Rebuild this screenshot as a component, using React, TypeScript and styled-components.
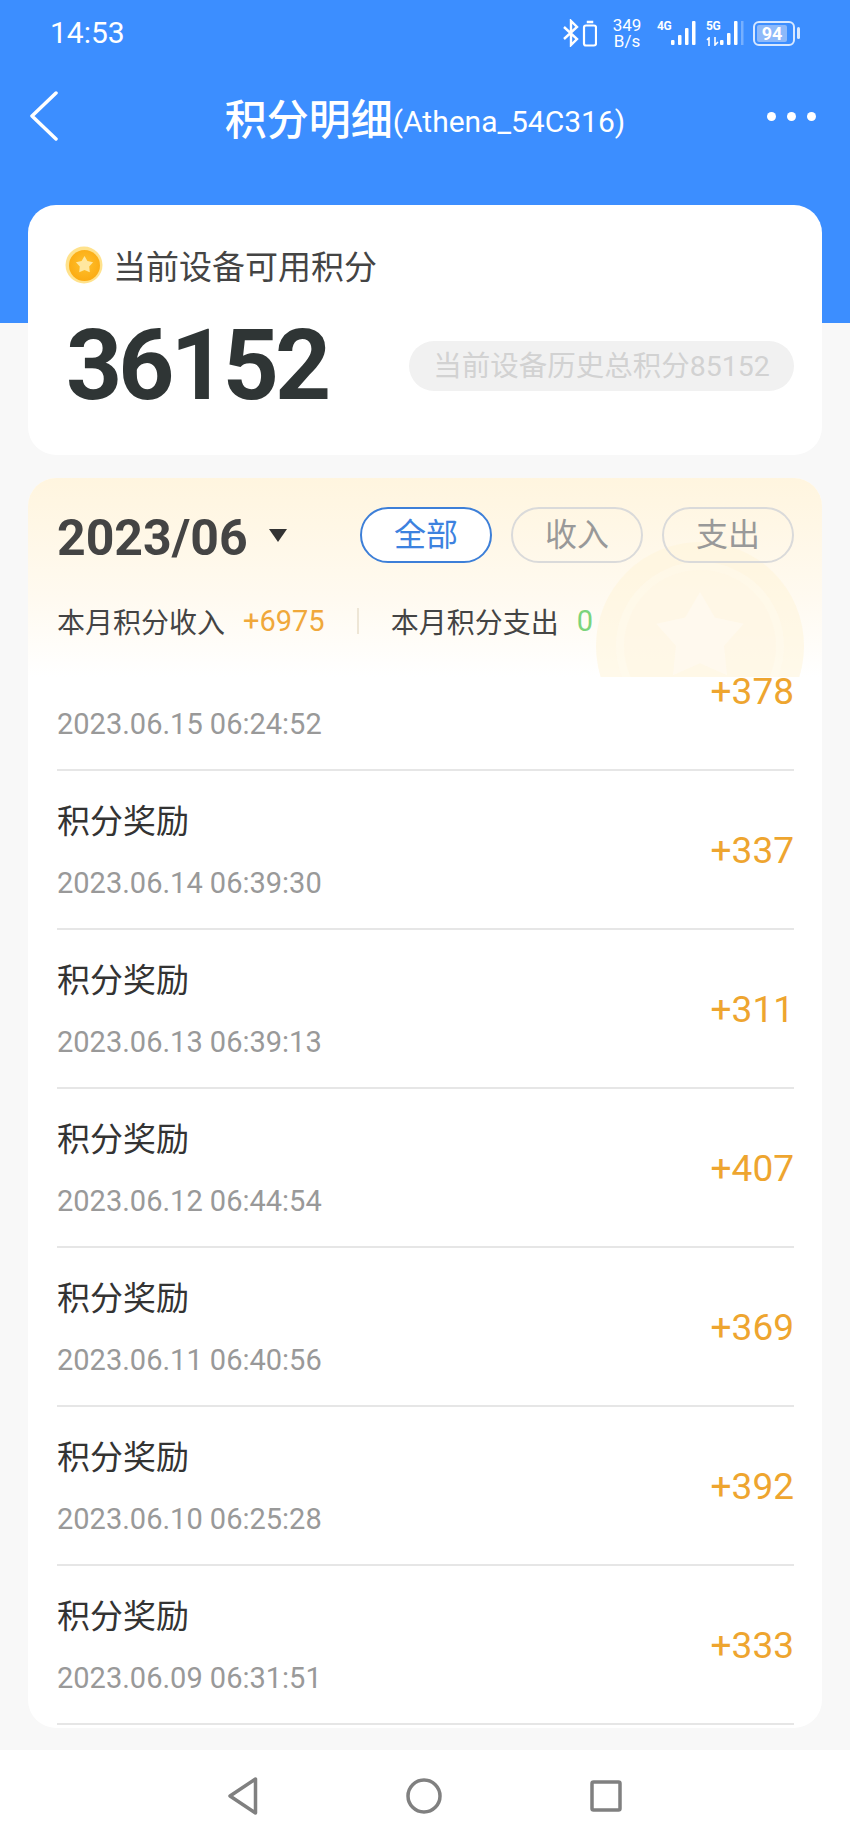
import styled, { createGlobalStyle } from 'styled-components'

const GlobalStyle = createGlobalStyle`
  html, body {
    margin: 0;
    padding: 0;
    background: #f8f8f8;
  }
  * {
    box-sizing: border-box;
  }
`
const Page = styled.div`
  width: 850px;
  height: 1842px;
  display: flex;
  flex-direction: column;
  overflow: hidden;
  font-family: Roboto, "Noto Sans CJK SC", sans-serif;
  background: linear-gradient(#3c8eff 323px, #f8f8f8 323px);
`
const StatusBar = styled.div`
  height: 66px;
  padding: 0 50px;
  display: flex;
  align-items: center;
  justify-content: space-between;
  color: #fff;
`
const Clock = styled.span`
  font-size: 30px;
  line-height: 66px;
`
const StatusIcons = styled.div`
  display: flex;
  align-items: center;
  height: 32px;
`
const Speed = styled.div`
  width: 30px;
  margin: 0 15px;
  font-size: 17px;
  line-height: 16px;
  text-align: center;
`
const Signal = styled.div<{ $right: number }>`
  display: flex;
  height: 26px;
  margin-right: ${p => p.$right}px;
`
const NetStack = styled.div`
  width: 14px;
  display: flex;
  flex-direction: column;
  justify-content: space-between;
`
const NetLabel = styled.span`
  font-size: 12px;
  font-weight: 700;
  line-height: 12px;
  letter-spacing: -0.5px;
`
const Battery = styled.div`
  width: 42px;
  height: 25px;
  padding: 2px;
  border: 2px solid #d8e8ff;
  border-radius: 6px;
  display: flex;
`
const BatteryFill = styled.div`
  width: 30px;
  border-radius: 2px;
  background: #8db9fa;
  color: #fff;
  font-size: 18px;
  font-weight: 700;
  line-height: 17px;
  text-align: center;
`
const BatteryCap = styled.div`
  width: 3px;
  height: 12px;
  margin-left: 2px;
  border-radius: 2px;
  background: #d8e8ff;
`
const NavBar = styled.div`
  height: 100px;
  padding: 0 34px 0 30px;
  display: flex;
  align-items: center;
  justify-content: space-between;
`
const Title = styled.div`
  color: #fff;
  font-size: 42px;
  font-weight: 500;
  display: flex;
  align-items: center;
  margin-left: 25px;
`
const SubTitle = styled.span`
  margin-top: 10px;
  font-size: 30px;
  font-weight: 400;
`
const Dots = styled.div`
  display: flex;
  gap: 11px;
`
const Dot = styled.i`
  width: 9px;
  height: 9px;
  border-radius: 50%;
  background: #fff;
`
const Card = styled.section`
  margin: 39px 28px 0 28px;
  height: 250px;
  padding: 40px 28px 0 37px;
  border-radius: 28px;
  background: #fff;
`
const CardLabel = styled.div`
  display: flex;
  align-items: center;
  gap: 10px;
  height: 40px;
  color: #444;
  font-size: 33px;
`
const PointsRow = styled.div`
  margin-top: 31px;
  height: 100px;
  display: flex;
  align-items: center;
  justify-content: space-between;
`
const Points = styled.div`
  color: #2f3535;
  font-size: 98px;
  font-weight: 700;
  letter-spacing: -4px;
  line-height: 100px;
  margin-left: 1px;
`
const TotalPill = styled.div`
  width: 385px;
  height: 50px;
  border-radius: 25px;
  background: #f1f1f1;
  color: #d2d2d2;
  font-size: 28.5px;
  line-height: 52px;
  text-align: center;
  white-space: nowrap;
`
const Panel = styled.section`
  margin: 23px 28px 0 28px;
  height: 1250px;
  border-radius: 28px;
  background: #fff;
  overflow: hidden;
`
const PanelHeader = styled.div`
  position: relative;
  height: 199px;
  padding: 29px 28px 0 29px;
  overflow: hidden;
  background: linear-gradient(#fff5df, #fffaf0 60%, #fff);
`
const Watermark = styled.svg`
  position: absolute;
  right: 14px;
  top: 62px;
`
const FilterRow = styled.div`
  position: relative;
  display: flex;
  align-items: center;
  height: 56px;
`
const Month = styled.div`
  margin-top: 6px;
  color: #444;
  font-size: 50px;
  font-weight: 700;
  line-height: 56px;
`
const Caret = styled.i`
  margin: 0 auto 0 21px;
  border-style: solid;
  border-width: 13px 9px 0;
  border-color: #333 transparent transparent;
`
const FilterButton = styled.div<{ $active?: boolean }>`
  width: 132px;
  height: 56px;
  margin-left: 19px;
  border: 2px solid ${p => (p.$active ? '#3d7fd8' : '#dadada')};
  border-radius: 28px;
  color: ${p => (p.$active ? '#3d82df' : '#999')};
  background: ${p => (p.$active ? '#fff' : 'transparent')};
  font-size: 32px;
  line-height: 53px;
  text-align: center;
`
const Summary = styled.div`
  position: relative;
  margin-top: 38px;
  height: 40px;
  display: flex;
  align-items: center;
  color: #444;
  font-size: 28px;
`
const SummaryValue = styled.span<{ $color: string }>`
  margin-left: 18px;
  font-size: 29px;
  color: ${p => p.$color};
`
const SummaryDivider = styled.i`
  width: 2px;
  height: 26px;
  margin: 0 32px;
  background: #eee6d6;
`
const Scroller = styled.div`
  height: 1051px;
  overflow: hidden;
`
const RowList = styled.div`
  margin-top: -65px;
`
const Row = styled.div`
  height: 159px;
  margin: 0 28px 0 29px;
  border-bottom: 2px solid #e6e6e6;
  display: flex;
  align-items: center;
  justify-content: space-between;
`
const RowText = styled.div`
  height: 159px;
  padding-top: 30px;
`
const RowTitle = styled.div`
  height: 44px;
  color: #333;
  font-size: 33px;
  line-height: 44px;
`
const RowDate = styled.div`
  margin-top: 19px;
  color: #999;
  font-size: 29px;
  line-height: 40px;
`
const RowAmount = styled.div`
  padding-top: 2px;
  color: #eea52f;
  font-size: 37px;
`
const BottomBar = styled.div`
  margin-top: 22px;
  height: 92px;
  background: #fff;
  display: flex;
  align-items: center;
  justify-content: center;
  gap: 148px;
`

// the first row is scrolled under the panel header, its title is out of sight
const rows = [
  { title: '', date: '2023.06.15 06:24:52', amount: 378 },
  { title: '积分奖励', date: '2023.06.14 06:39:30', amount: 337 },
  { title: '积分奖励', date: '2023.06.13 06:39:13', amount: 311 },
  { title: '积分奖励', date: '2023.06.12 06:44:54', amount: 407 },
  { title: '积分奖励', date: '2023.06.11 06:40:56', amount: 369 },
  { title: '积分奖励', date: '2023.06.10 06:25:28', amount: 392 },
  { title: '积分奖励', date: '2023.06.09 06:31:51', amount: 333 },
]

const starPoints = (cx: number, cy: number, r: number) =>
  Array.from({ length: 10 }, (_, i) => {
    const a = (Math.PI / 5) * i - Math.PI / 2
    const d = i % 2 ? r * 0.55 : r
    return `${cx + d * Math.cos(a)},${cy + d * Math.sin(a)}`
  }).join(' ')

const Bars = ({ heights, step, width, faint }: { heights: number[]; step: number; width: number; faint?: boolean }) => (
  <svg width={width} height="26" viewBox={`0 0 ${width} 26`}>
    {heights.map((h, i) => (
      <rect key={i} x={i * step} y={25 - h} width="3.5" height={h} rx="1" fill="#fff" />
    ))}
    {faint && <rect x={heights.length * step} y="1" width="2.5" height="24" fill="#fff" opacity="0.3" />}
  </svg>
)

const CoinIcon = () => (
  <svg width="38" height="38" viewBox="0 0 38 38">
    <defs>
      <radialGradient id="coin" cx="0.5" cy="0.45" r="0.6">
        <stop offset="0" stopColor="#ffc12e" />
        <stop offset="1" stopColor="#fba910" />
      </radialGradient>
    </defs>
    <circle cx="19" cy="19" r="18.5" fill="#ffe28c" />
    <circle cx="19.5" cy="19.5" r="15.5" fill="url(#coin)" />
    <polygon points={starPoints(19.5, 19, 9)} fill="#ffe79f" />
  </svg>
)

export default function App() {
  return (
    <Page>
      <GlobalStyle />
      <StatusBar>
        <Clock>14:53</Clock>
        <StatusIcons>
          <svg width="34" height="28" viewBox="0 0 34 28" fill="none" stroke="#fff">
            <path d="M1 8l13 12-6 6V2l6 6L1 20" strokeWidth="2.4" />
            <rect x="21" y="6.5" width="12" height="20" rx="2" strokeWidth="2.2" />
            <rect x="24" y="2" width="6" height="2" fill="#fff" strokeWidth="0.5" />
          </svg>
          <Speed>
            <div>349</div>
            <div>B/s</div>
          </Speed>
          <Signal $right={10}>
            <NetStack><NetLabel>4G</NetLabel></NetStack>
            <Bars heights={[5, 10, 17, 24]} step={7} width={25} />
          </Signal>
          <Signal $right={9}>
            <NetStack>
              <NetLabel>5G</NetLabel>
              <svg width="14" height="9" viewBox="0 0 14 9" fill="none" stroke="#fff" strokeWidth="1.6">
                <path d="M3 9V1L1 3M9 0v8l3-3" />
              </svg>
            </NetStack>
            <Bars heights={[5, 12, 24]} step={7} width={24} faint />
          </Signal>
          <Battery>
            <BatteryFill>94</BatteryFill>
          </Battery>
          <BatteryCap />
        </StatusIcons>
      </StatusBar>
      <NavBar>
        <svg width="28" height="50" viewBox="0 0 28 50" fill="none">
          <path d="M26 2L2 25l24 23" stroke="#fff" strokeWidth="3.5" strokeLinecap="round" strokeLinejoin="round" />
        </svg>
        <Title>积分明细<SubTitle>(Athena_54C316)</SubTitle></Title>
        <Dots><Dot /><Dot /><Dot /></Dots>
      </NavBar>
      <Card>
        <CardLabel><CoinIcon />当前设备可用积分</CardLabel>
        <PointsRow>
          <Points>36152</Points>
          <TotalPill>当前设备历史总积分85152</TotalPill>
        </PointsRow>
      </Card>
      <Panel>
        <PanelHeader>
          <Watermark width="216" height="137" viewBox="0 0 216 137">
            <circle cx="108" cy="106" r="104" fill="#fff4d8" opacity="0.55" />
            <circle cx="108" cy="106" r="84" fill="#fffaf0" opacity="0.45" />
            <circle cx="108" cy="106" r="76" fill="#fff6e2" opacity="0.4" />
            <polygon points={starPoints(108, 98, 46)} fill="#fffaf0" opacity="0.75" />
          </Watermark>
          <FilterRow>
            <Month>2023/06</Month>
            <Caret />
            <FilterButton $active>全部</FilterButton>
            <FilterButton>收入</FilterButton>
            <FilterButton>支出</FilterButton>
          </FilterRow>
          <Summary>
            本月积分收入<SummaryValue $color="#f0a83a">+6975</SummaryValue>
            <SummaryDivider />
            本月积分支出<SummaryValue $color="#7bd47b">0</SummaryValue>
          </Summary>
        </PanelHeader>
        <Scroller>
          <RowList>
            {rows.map(row => (
              <Row key={row.date}>
                <RowText>
                  <RowTitle>{row.title}</RowTitle>
                  <RowDate>{row.date}</RowDate>
                </RowText>
                <RowAmount>+{row.amount}</RowAmount>
              </Row>
            ))}
          </RowList>
        </Scroller>
      </Panel>
      <BottomBar>
        <svg width="30" height="38" viewBox="0 0 30 38" fill="none" stroke="#808080" strokeWidth="3.5" strokeLinejoin="round">
          <path d="M27.5 2v34L2 19z" />
        </svg>
        <svg width="36" height="36" viewBox="0 0 36 36" fill="none" stroke="#808080" strokeWidth="3.5">
          <circle cx="18" cy="18" r="16" />
        </svg>
        <svg width="32" height="32" viewBox="0 0 32 32" fill="none" stroke="#808080" strokeWidth="3.5" strokeLinejoin="round">
          <rect x="2" y="2" width="28" height="28" rx="1.5" />
        </svg>
      </BottomBar>
    </Page>
  )
}
